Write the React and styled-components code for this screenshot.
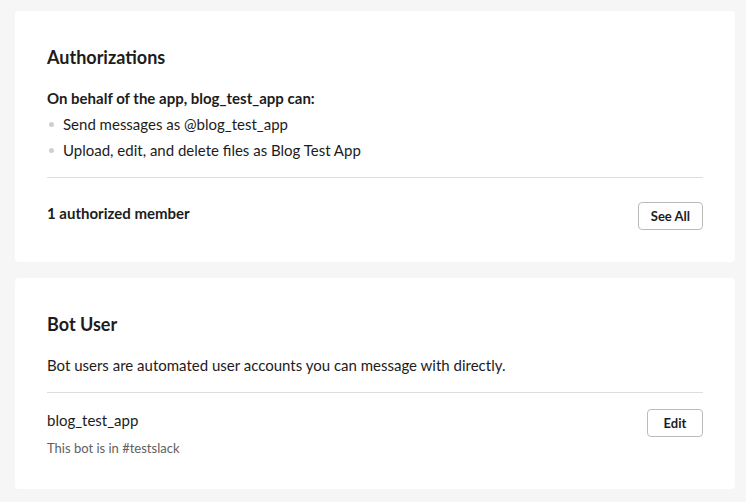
import React from "react"
import styled, { createGlobalStyle } from 'styled-components';

const GlobalStyle = createGlobalStyle`
    html, body {
        margin: 0;
        padding: 0;
        background: #f6f6f6;
    }
    body {
        font-family: Lato, "Open Sans", sans-serif;
        color: #1d1c1d;
        -webkit-font-smoothing: antialiased;
    }
`;

const App = () => {
    return (
        <Page>
            <GlobalStyle />
            <Card>
                <Title>Authorizations</Title>
                <Lead>On behalf of the app, blog_test_app can:</Lead>
                <Bullets>
                    <li>Send messages as @blog_test_app</li>
                    <li>Upload, edit, and delete files as Blog Test App</li>
                </Bullets>
                <Divider $gap={14} />
                <Row $top={24}>
                    <Strong>1 authorized member</Strong>
                    <Button>See All</Button>
                </Row>
            </Card>
            <Card>
                <Title>Bot User</Title>
                <Text>Bot users are automated user accounts you can message with directly.</Text>
                <Divider $gap={16} />
                <Row $top={16}>
                    <div>
                        <Text>blog_test_app</Text>
                        <Hint>This bot is in #testslack</Hint>
                    </div>
                    <Button $min={56}>Edit</Button>
                </Row>
            </Card>
        </Page>
    )
}

const Page = styled.div`
    display: flex;
    flex-direction: column;
    gap: 16px;
    padding: 11px 11px 0 15px;
`;

const Card = styled.section`
    background: #fff;
    border-radius: 4px;
    padding: 32px;
`;

const Title = styled.h2`
    margin: 0 0 16px;
    font-size: 18px;
    line-height: 28px;
    font-weight: 700;
`;

const Lead = styled.div`
    font-size: 15px;
    line-height: 22px;
    font-weight: 700;
`;

const Bullets = styled.ul`
    list-style: none;
    margin: 2px 0 0;
    padding: 0;
    li {
        position: relative;
        padding-left: 16px;
        font-size: 15px;
        line-height: 26px;
    }
    li::before {
        content: "";
        position: absolute;
        left: 2px;
        top: 11px;
        width: 5px;
        height: 5px;
        border-radius: 50%;
        background: #cfcfcf;
    }
`;

const Divider = styled.hr`
    border: none;
    border-top: 1px solid #dddddd;
    margin: ${p => p.$gap}px 0 0;
`;

const Row = styled.div`
    display: flex;
    justify-content: space-between;
    align-items: flex-start;
    padding-top: ${p => p.$top}px;
`;

const Strong = styled.div`
    font-size: 15px;
    line-height: 22px;
    font-weight: 700;
`;

const Text = styled.div`
    font-size: 15px;
    line-height: 22px;
`;

const Hint = styled.div`
    margin-top: 8px;
    font-size: 13px;
    line-height: 18px;
    color: #616061;
`;

const Button = styled.button`
    height: 28px;
    min-width: ${p => p.$min || 0}px;
    padding: 0 12px;
    background: #fff;
    border: 1px solid #bbbbbb;
    border-radius: 4px;
    font-family: Lato, "Open Sans", sans-serif;
    font-size: 13px;
    font-weight: 700;
    color: #1d1c1d;
    cursor: pointer;
`;

export default App
